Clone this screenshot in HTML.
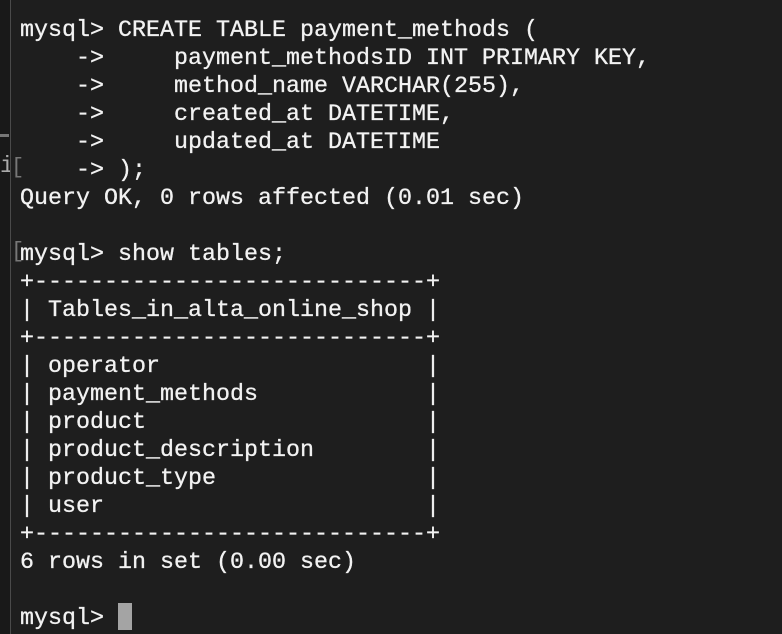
<!DOCTYPE html>
<html><head><style>
html,body{margin:0;padding:0;width:782px;height:634px;overflow:hidden;background:#1e1e1e;}
.strip{position:absolute;left:0;top:0;width:10px;height:634px;background:#191919;border-right:1px solid #4a4a4a;}
.mark1{position:absolute;left:0;top:134px;width:9px;height:3px;background:#777;}
.mi{position:absolute;left:0;top:153px;color:#aaa;font:23px "Liberation Mono",monospace;width:10px;overflow:hidden;}
pre{position:absolute;left:20px;top:17px;margin:0;font-family:"Liberation Mono",monospace;font-size:23.33px;line-height:28px;color:#f2f2f2;-webkit-text-stroke:0.3px #f2f2f2;}
.br{position:absolute;color:#777;font:22px "Liberation Mono",monospace;}
.cur{position:absolute;left:118px;top:603px;width:14px;height:27px;background:#a4a4a4;}
</style></head><body>
<div class="strip"></div><div class="mark1"></div><div class="mi">i</div>
<div class="br" style="left:11px;top:155px">[</div>
<div class="br" style="left:11px;top:239px">[</div>
<pre>mysql&gt; CREATE TABLE payment_methods (
    -&gt;     payment_methodsID INT PRIMARY KEY,
    -&gt;     method_name VARCHAR(255),
    -&gt;     created_at DATETIME,
    -&gt;     updated_at DATETIME
    -&gt; );
Query OK, 0 rows affected (0.01 sec)

mysql&gt; show tables;
+----------------------------+
| Tables_in_alta_online_shop |
+----------------------------+
| operator                   |
| payment_methods            |
| product                    |
| product_description        |
| product_type               |
| user                       |
+----------------------------+
6 rows in set (0.00 sec)

mysql&gt; </pre>
<div class="cur"></div>
</body></html>
